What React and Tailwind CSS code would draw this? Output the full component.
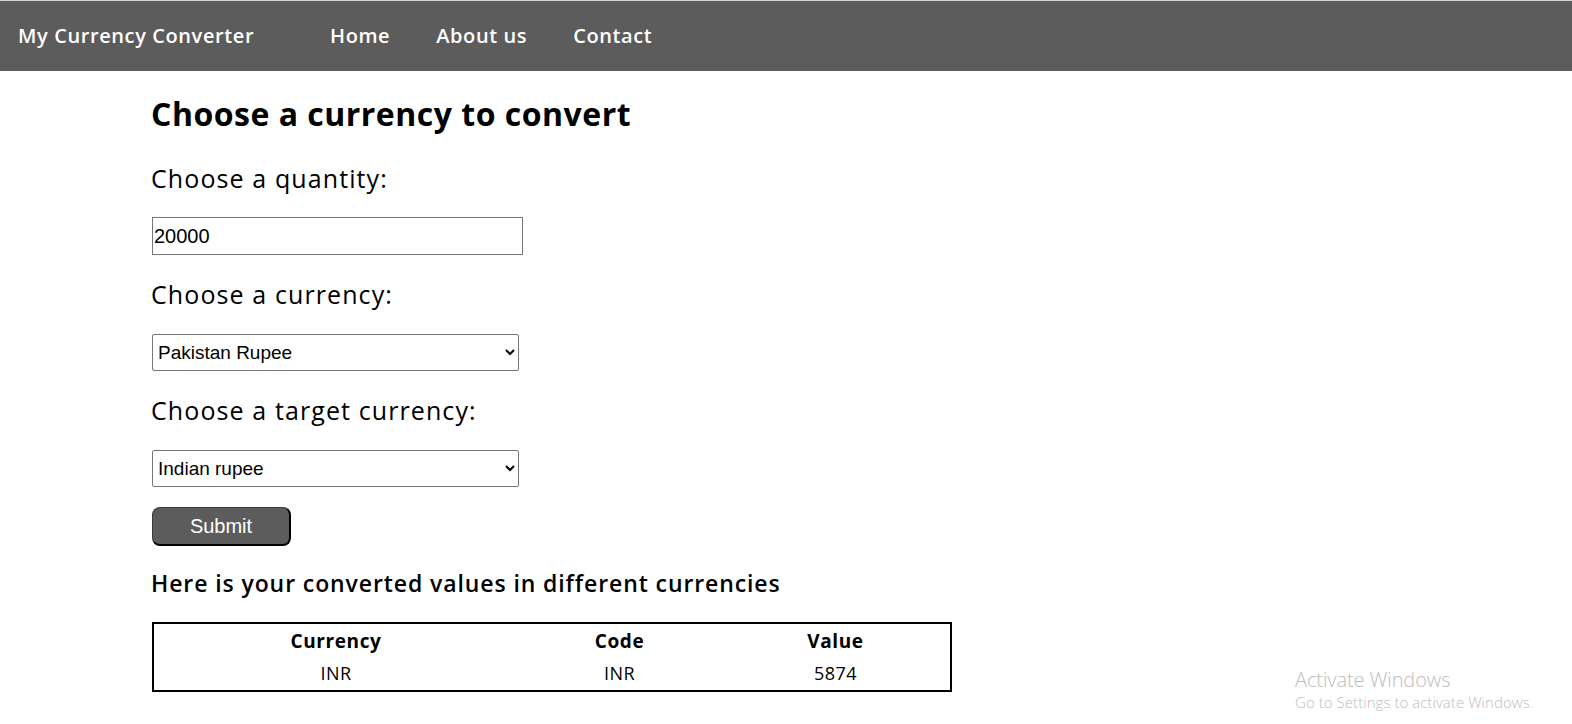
import React from "react";

const poppins = { fontFamily: '"Open Sans", "Noto Sans", sans-serif' };
const arial = { fontFamily: '"Liberation Sans", Arial, sans-serif' };

export default function App() {
  return (
    <div className="relative min-h-[724px] w-full bg-white text-black" style={poppins}>
      <nav className="flex h-[71px] items-center border-t border-[#d4d4d4] bg-[#5c5c5c] text-white">
        <div className="ml-[18px] w-[312px] text-[20px] font-semibold tracking-[0.6px]">My Currency Converter</div>
        <div className="flex gap-[46px] text-[20px] font-semibold tracking-[0.6px]">
          <a>Home</a>
          <a>About us</a>
          <a>Contact</a>
        </div>
      </nav>

      <main className="ml-[151px] flex flex-col items-start">
        <h1 className="mt-[23px] text-[32px] font-bold leading-[40px] tracking-[0.5px]">Choose a currency to convert</h1>

        <label className="mt-[26px] text-[25px] leading-[36px] tracking-[1.1px]">Choose a quantity:</label>
        <input
          className="mt-[21px] ml-[1px] h-[38px] w-[371px] border border-[#767676] px-[1px] text-[20px]"
          style={arial}
          defaultValue="20000"
        />

        <label className="mt-[21px] text-[25px] leading-[36px] tracking-[1.1px]">Choose a currency:</label>
        <select
          className="mt-[22px] ml-[1px] h-[37px] w-[367px] rounded-[2px] border border-[#767676] bg-white pl-[1px] text-[19px]"
          style={arial}
          defaultValue="pkr"
        >
          <option value="pkr">Pakistan Rupee</option>
        </select>

        <label className="mt-[21px] text-[25px] leading-[36px] tracking-[1.1px]">Choose a target currency:</label>
        <select
          className="mt-[22px] ml-[1px] h-[37px] w-[367px] rounded-[2px] border border-[#767676] bg-white pl-[1px] text-[19px]"
          style={arial}
          defaultValue="inr"
        >
          <option value="inr">Indian rupee</option>
        </select>

        <button
          className="mt-[20px] ml-[1px] h-[39px] w-[139px] rounded-[8px] border border-[#3a3a3a] border-b-2 border-r-2 border-b-black border-r-black bg-[#5c5c5c] text-[20px] text-white"
          style={arial}
        >
          Submit
        </button>

        <h2 className="mt-[22px] text-[23px] font-semibold leading-[30px] tracking-[0.9px]">
          Here is your converted values in different currencies
        </h2>

        <table className="mt-[24px] ml-[1px] w-[800px] border-2 border-black">
          <thead>
            <tr className="h-[34px] text-[19px] font-semibold tracking-[0.6px]">
              <th className="w-[365px] pt-[2px] text-center">Currency</th>
              <th className="w-[203px] pt-[2px] text-center">Code</th>
              <th className="pt-[2px] text-center">Value</th>
            </tr>
          </thead>
          <tbody>
            <tr className="h-[34px] text-[18px] tracking-[0.4px]">
              <td className="pb-[1px] text-center">INR</td>
              <td className="pb-[1px] text-center">INR</td>
              <td className="pb-[1px] text-center">5874</td>
            </tr>
          </tbody>
        </table>
      </main>

      <div className="absolute left-[1295px] top-[668px] text-[#bdbdbd]">
        <div className="text-[20px] font-light leading-[24px] tracking-[-0.1px]">Activate Windows</div>
        <div className="text-[15px] font-light leading-[20px] tracking-[0.05px]">Go to Settings to activate Windows.</div>
      </div>
    </div>
  );
}
